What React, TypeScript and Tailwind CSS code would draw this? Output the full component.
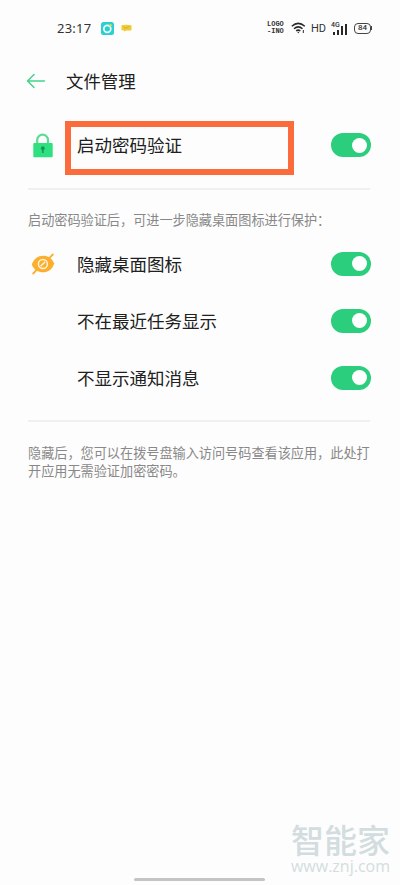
import React from "react";

function Toggle({ label }: { label: string }) {
  return (
    <button
      type="button"
      role="switch"
      aria-checked="true"
      aria-label={label}
      className="flex h-6 w-10 shrink-0 items-center justify-end rounded-full bg-[#2bce7c] pr-[4.5px]"
    >
      <span className="size-[15px] rounded-full bg-white" />
    </button>
  );
}

function LockIcon() {
  return (
    <svg width="20" height="25" viewBox="0 0 20 25">
      <path d="M4.2 11V7a5.4 5.4 0 0 1 10.8 0v4" fill="none" stroke="#5bdc97" strokeWidth="2.2" />
      <rect x="0.3" y="10" width="19.4" height="14.2" rx="1" fill="#2fe080" />
      <circle cx="9.8" cy="15.2" r="1.9" fill="#159653" />
      <rect x="9.1" y="15.5" width="1.5" height="4.6" rx="0.7" fill="#159653" />
    </svg>
  );
}

function HiddenEyeIcon() {
  return (
    <svg width="24" height="22" viewBox="0 0 24 22">
      <path d="M0.8 11.5C2.8 5.5 7 2.7 12 2.7S21 5 23.2 10.5C21.2 16.5 17 19.3 12 19.3S3 17 .8 11.5Z" fill="#fcae2d" />
      <path d="M18.5 4.8 21.8 1.5M2.2 20.5 5.5 17.2" stroke="#fcae2d" strokeWidth="1.8" strokeLinecap="round" />
      <circle cx="11.9" cy="11" r="4.5" fill="none" stroke="#fff3dc" strokeWidth="1.5" />
      <path d="m9.600 13.300 4.600-4.600" stroke="#fff3dc" strokeWidth="1.5" />
    </svg>
  );
}

function StatusBar() {
  return (
    <header className="flex h-14 items-center pr-[28px] pl-[57px] text-[#333]">
      <span className="w-[44px] font-['Noto_Sans',sans-serif] text-[13px] leading-none tracking-[0.25px]">23:17</span>
      <svg className="shrink-0" width="13" height="13" viewBox="0 0 13 13">
        <rect width="13" height="13" rx="2.5" fill="#2ccdd3" />
        <circle cx="6.3" cy="6.8" r="3.5" fill="none" stroke="#effffc" strokeWidth="1.7" />
        <circle cx="9.5" cy="3.3" r="1.3" fill="#c8e34c" />
      </svg>
      <svg className="ml-[7px] shrink-0" width="11" height="8" viewBox="0 0 11 8">
        <path d="M.5 1.2Q5.5.2 10.5 1.2V6.2Q8 6.900 5.500 6.400L3 7.400 3.100 6.400.5 6.200Z" fill="#f1cb36" />
        <path d="m2.600 3 2 1.200L8 2.800" fill="none" stroke="#c5a425" strokeWidth=".7" />
      </svg>
      <div className="ml-auto flex items-center">
        <div className="mr-[7px] w-[17px] font-['Liberation_Mono',monospace] text-[7px] leading-[7px] font-bold">
          <div>LOGO</div>
          <div>-INO</div>
        </div>
        <svg className="mr-[5px]" width="15" height="12" viewBox="0 0 15 12" fill="none" stroke="#292929" strokeWidth="1.5">
          <path d="M.8 4.200Q7.200-1.400 13.800 4.200M3 6.700Q7.200 3 11.500 6.700M5.200 9Q7.200 7.200 9.300 9" />
          <circle cx="7.300" cy="10.500" r=".7" fill="#292929" stroke="none" />
          <path d="M12.300 8v3" strokeWidth="1" />
        </svg>
        <span className="mr-[5px] w-[15px] font-['Roboto',sans-serif] text-[11px] leading-none">HD</span>
        <div className="mr-[6px] flex h-[13px] w-[17px] items-end">
          <div className="flex w-[8px] flex-col items-start gap-px">
            <span className="font-['Roboto',sans-serif] text-[7px] leading-[7px] font-medium">4G</span>
            <span className="flex items-end gap-[2px] pl-[2px]">
              <i className="h-[3px] w-[2px] bg-[#292929]" />
              <i className="h-[5px] w-[2px] bg-[#292929]" />
            </span>
          </div>
          <i className="ml-[2px] h-[9px] w-[2px] bg-[#292929]" />
          <i className="ml-[2px] h-[11px] w-[2px] bg-[#292929]" />
        </div>
        <div className="flex items-center">
          <span className="flex h-[11px] w-[17px] items-center justify-center rounded-[4px] border border-[#444] font-['Roboto',sans-serif] text-[8px] leading-none font-medium">84</span>
          <i className="h-1 w-px bg-[#444]" />
        </div>
      </div>
    </header>
  );
}

function OptionRow({ label, icon }: { label: string; icon?: React.ReactNode }) {
  return (
    <div className="flex h-[57px] items-center">
      <span className="flex w-[49px] shrink-0 items-center pl-[3px]">{icon}</span>
      <span className="flex-1 whitespace-nowrap text-[17.5px] leading-6">{label}</span>
      <Toggle label={label} />
    </div>
  );
}

export default function App() {
  return (
    <div className="flex h-[885px] w-[400px] flex-col overflow-hidden bg-[#fdfdfd] font-['Noto_Sans_CJK_SC',sans-serif] text-[#202020]">
      <StatusBar />
      <div className="flex h-[50px] items-center pl-[26px]">
        <svg width="20" height="16" viewBox="0 0 20 16" fill="none" stroke="#47d18d" strokeWidth="1.5" strokeLinecap="round" strokeLinejoin="round">
          <path d="M18.5 8H1.5M8 1.500 1.500 8 8 14.500" />
        </svg>
        <h1 className="ml-5 text-[17.4px] leading-6 font-normal">文件管理</h1>
      </div>

      <main className="flex flex-1 flex-col">
        <div className="flex h-[82px] items-center pr-[29px] pb-[4px] pl-[33px]">
          <LockIcon />
          <div className="mt-[6px] ml-[12px] flex h-[54px] w-[229px] items-center border-[6px] border-[#fb6b3b] pb-[6px] pl-[6px] text-[17.5px] leading-6">
            启动密码验证
          </div>
          <div className="ml-auto">
            <Toggle label="启动密码验证" />
          </div>
        </div>

        <section className="mx-7 w-[342px] border-y-2 border-[#f0f0f0]">
          <p className="mt-[21px] whitespace-nowrap text-[13.15px] leading-[18px] text-[#888]">
            启动密码验证后，可进一步隐藏桌面图标进行保护：
          </p>
          <div className="-mr-px mt-[6px] pb-[14px]">
            <OptionRow label="隐藏桌面图标" icon={<HiddenEyeIcon />} />
            <OptionRow label="不在最近任务显示" />
            <OptionRow label="不显示通知消息" />
          </div>
        </section>

        <p className="mx-7 mt-[22px] text-[13.15px] leading-[18px] whitespace-nowrap text-[#888]">
          隐藏后，您可以在拨号盘输入访问号码查看该应用，此处打
          <br />
          开应用无需验证加密密码。
        </p>
      </main>

      <footer className="flex flex-col">
        <div className="mr-[10px] self-end text-[#d3dddf]">
          <div className="text-[33px] leading-[36px] font-medium">智能家</div>
          <div className="font-['Open_Sans',sans-serif] text-[16px] leading-[18px]">www.znj.com</div>
        </div>
        <div className="mt-[3px] mr-[2px] mb-[4px] h-[3px] w-[131px] self-center rounded-full bg-[#c4c4c4]" />
      </footer>
    </div>
  );
}
